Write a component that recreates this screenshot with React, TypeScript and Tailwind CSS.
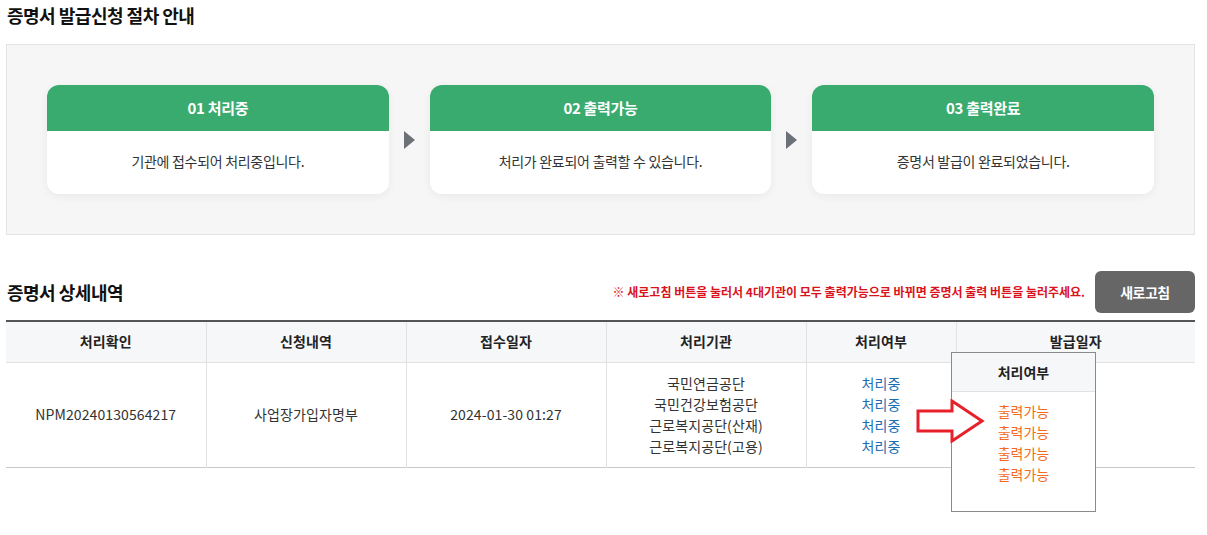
const font = { fontFamily: '"Noto Sans CJK KR", "Noto Sans", sans-serif' };

const steps = [
  { title: "01 처리중", desc: "기관에 접수되어 처리중입니다." },
  { title: "02 출력가능", desc: "처리가 완료되어 출력할 수 있습니다." },
  { title: "03 출력완료", desc: "증명서 발급이 완료되었습니다." },
];

const orgs = ["국민연금공단", "국민건강보험공단", "근로복지공단(산재)", "근로복지공단(고용)"];

function StepArrow() {
  return (
    <div className="flex w-[41px] shrink-0 items-center justify-center">
      <svg width="11" height="18" viewBox="0 0 11 18">
        <polygon points="0,0 11,9 0,18" fill="#6b7079" />
      </svg>
    </div>
  );
}

export default function App() {
  return (
    <div className="min-h-[535px] w-[1207px] bg-white text-[#222]" style={font}>
      <div className="ml-[6px] w-[1189px]">
        {/* 절차 안내 */}
        <h2 className="pt-[3px] pl-px text-[18px] leading-[24px] font-bold tracking-[-0.5px] text-[#111]">
          증명서 발급신청 절차 안내
        </h2>
        <div className="mt-[17px] flex border border-[#e3e3e3] bg-[#f6f6f6] px-[40px] py-[40px]">
          {steps.map((s, i) => (
            <div key={s.title} className="contents">
              {i > 0 && <StepArrow />}
              <div className="flex h-[109px] flex-1 flex-col overflow-hidden rounded-[12px] bg-white shadow-[0_2px_8px_rgba(0,0,0,0.06)]">
                <div className="flex h-[46px] items-center justify-center bg-[#39ab6f] text-[15px] font-bold tracking-[-0.3px] text-white">
                  {s.title}
                </div>
                <div className="flex flex-1 items-center justify-center pb-[2px] text-[14px] tracking-[-0.3px] text-[#333]">
                  {s.desc}
                </div>
              </div>
            </div>
          ))}
        </div>

        {/* 상세내역 */}
        <div className="mt-[36px] flex items-center">
          <h2 className="flex-1 pl-px text-[18px] font-bold tracking-[-0.5px] text-[#111]">증명서 상세내역</h2>
          <p className="mr-[10px] text-[12px] font-bold tracking-normal text-[#d9121b]">
            ※ 새로고침 버튼을 눌러서 4대기관이 모두 출력가능으로 바뀌면 증명서 출력 버튼을 눌러주세요.
          </p>
          <button className="h-[42px] w-[100px] rounded-[6px] bg-[#666666] text-[14px] font-bold tracking-[-0.5px] text-white">
            새로고침
          </button>
        </div>

        <div className="relative mt-[7px]">
          <table className="w-full table-fixed border-collapse border-t-2 border-[#555] text-[14px] tracking-[0.1px]">
            <colgroup>
              <col className="w-[200px]" />
              <col className="w-[200px]" />
              <col className="w-[200px]" />
              <col className="w-[200px]" />
              <col className="w-[150px]" />
              <col />
            </colgroup>
            <thead>
              <tr className="h-[41px] border-b border-[#e2e2e2] bg-[#f6f7f9]">
                {["처리확인", "신청내역", "접수일자", "처리기관", "처리여부", "발급일자"].map((h, i) => (
                  <th
                    key={h}
                    className={`font-bold text-[#222] ${i < 5 ? "border-r border-[#e2e2e2]" : ""}`}
                  >
                    {h}
                  </th>
                ))}
              </tr>
            </thead>
            <tbody>
              <tr className="h-[105px] border-b border-[#c8c8c8] text-[#333]">
                <td className="border-r border-[#e2e2e2] text-center">NPM20240130564217</td>
                <td className="border-r border-[#e2e2e2] text-center">사업장가입자명부</td>
                <td className="border-r border-[#e2e2e2] text-center">2024-01-30 01:27</td>
                <td className="border-r border-[#e2e2e2] text-center leading-[21px]">
                  {orgs.map((o) => (
                    <div key={o}>{o}</div>
                  ))}
                </td>
                <td className="border-r border-[#e2e2e2] text-center leading-[21px] text-[#1a6db3]">
                  {orgs.map((o) => (
                    <div key={o}>처리중</div>
                  ))}
                </td>
                <td />
              </tr>
            </tbody>
          </table>

          {/* 처리여부 팝업 */}
          <div className="absolute top-[32px] left-[945px] h-[160px] w-[145px] border border-[#8a8a8a] bg-white text-[14px]">
            <div className="flex h-[39px] items-center justify-center border-b border-[#e2e2e2] bg-[#f6f7f9] font-bold text-[#222]">
              처리여부
            </div>
            <div className="pt-[9px] text-center leading-[21px] text-[#f26b21]">
              {orgs.map((o) => (
                <div key={o}>출력가능</div>
              ))}
            </div>
          </div>

          {/* 빨간 화살표 */}
          <svg className="absolute top-[79px] left-[910px]" width="70" height="44" viewBox="0 0 70 44">
            <polygon
              points="2,12 36,12 36,2 66,22 36,42 36,32 2,32"
              fill="white"
              stroke="#e8202a"
              strokeWidth="3"
              strokeLinejoin="miter"
            />
          </svg>
        </div>
      </div>
    </div>
  );
}
